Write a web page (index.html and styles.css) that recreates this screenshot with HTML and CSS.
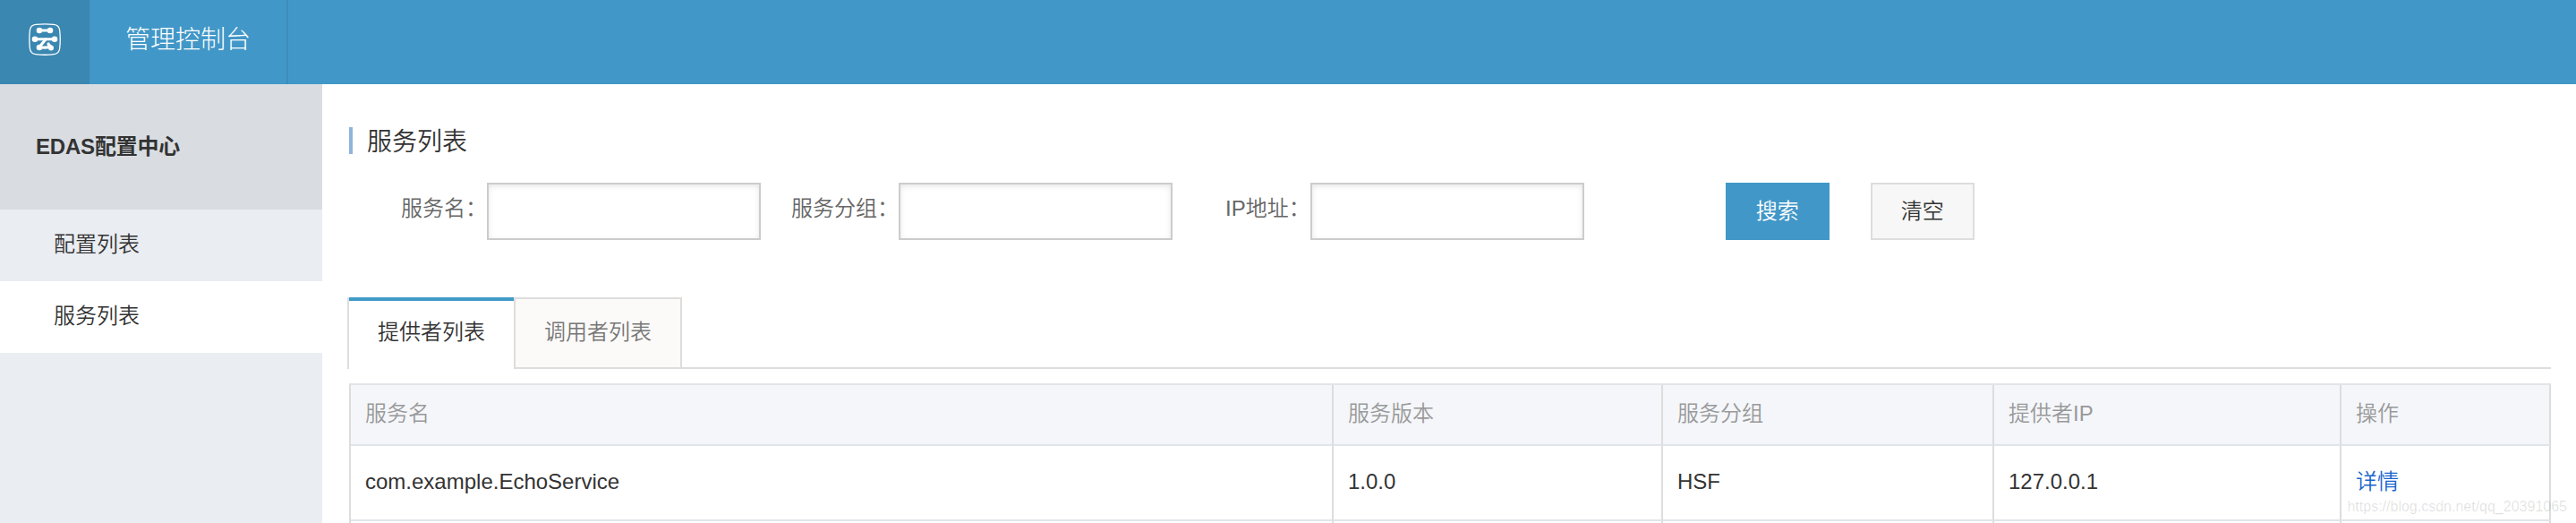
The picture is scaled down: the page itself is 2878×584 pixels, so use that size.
FILE: index.html
```html
<!DOCTYPE html>
<html lang="zh-CN">
<head>
  <meta charset="UTF-8">
  <title>EDAS配置中心</title>
  <link rel="stylesheet" href="styles.css">
</head>
<body>
  <!-- Top bar -->
  <div class="topbar">
    <div class="logo">
      <svg width="36" height="36" viewBox="0 0 36 36" fill="none" stroke="#fff" stroke-linecap="round">
        <path d="M8 1.4Q18 .2 28 1.4Q34 2 34.7 8Q35.8 18 34.7 28Q34 34 28 34.7Q18 35.8 8 34.7Q2 34 1.4 28Q.2 18 1.4 8Q2 2 8 1.4Z" stroke-width="1.3"/>
        <path d="M12 8H24M7 17.7H29" stroke-width="3"/>
        <path d="M19 18L12 26.5Q19 28 24.5 26" stroke-width="3.2"/>
        <path d="M22 23L25 27.5" stroke-width="3.2"/>
        <g fill="#fff" stroke="none">
          <circle cx="12" cy="8" r="3.3"/>
          <circle cx="24" cy="8" r="3.3"/>
          <circle cx="7" cy="17.7" r="3.3"/>
          <circle cx="29" cy="17.7" r="3.3"/>
          <circle cx="12" cy="27" r="3.3"/>
          <circle cx="25" cy="27.5" r="3"/>
        </g>
      </svg>
    </div>
    <div class="console-title">管理控制台</div>
  </div>

  <div class="layout">
    <!-- Sidebar -->
    <div class="sidebar">
      <div class="sidebar-title">EDAS配置中心</div>
      <a class="menu-item">配置列表</a>
      <a class="menu-item active">服务列表</a>
    </div>

    <!-- Content -->
    <div class="content">
      <div class="page-title">服务列表</div>

      <div class="search-form">
        <label for="service">服务名：</label>
        <input type="text" id="service">
        <label for="group">服务分组：</label>
        <input type="text" id="group">
        <label for="ip">IP地址：</label>
        <input type="text" id="ip">
        <button class="btn btn-primary">搜索</button>
        <button class="btn">清空</button>
      </div>

      <div class="tabs">
        <div class="tab active">提供者列表</div>
        <div class="tab">调用者列表</div>
        <div class="tab-line"></div>
      </div>

      <div class="table">
        <div class="row head">
          <div class="cell">服务名</div>
          <div class="cell">服务版本</div>
          <div class="cell">服务分组</div>
          <div class="cell">提供者IP</div>
          <div class="cell">操作</div>
        </div>
        <div class="row">
          <div class="cell">com.example.EchoService</div>
          <div class="cell">1.0.0</div>
          <div class="cell">HSF</div>
          <div class="cell">127.0.0.1</div>
          <div class="cell"><a class="link">详情</a></div>
        </div>
        <div class="row last">
          <div class="cell"></div>
          <div class="cell"></div>
          <div class="cell"></div>
          <div class="cell"></div>
          <div class="cell"></div>
        </div>
      </div>
    </div>
  </div>

  <div class="watermark">https://blog.csdn.net/qq_20391065</div>
</body>
</html>
```
FILE: styles.css
```css
* {
  box-sizing: border-box;
}

body {
  margin: 0;
  height: 584px;
  position: relative;
  font-family: "Liberation Sans", "Noto Sans CJK SC", sans-serif;
  font-size: 24px;
  font-weight: 350;
  color: #333;
  background-color: #fff;
}

.topbar {
  display: flex;
  height: 94px;
  background-color: #4197c7;
}

.logo {
  display: flex;
  width: 100px;
  padding: 26px 32px;
  background-color: #3a87b1;
}

.console-title {
  width: 222px;
  padding-left: 40px;
  border-right: 2px solid #3c8dba;
  line-height: 90px;
  font-size: 28px;
  font-weight: 300;
  color: #fff;
}

.layout {
  display: flex;
  height: 490px;
}

/* Sidebar */
.sidebar {
  width: 360px;
  background-color: #eaedf2;
}

.sidebar-title {
  height: 140px;
  padding-left: 40px;
  line-height: 139px;
  font-weight: bold;
  letter-spacing: -0.2px;
  background-color: #d9dde2;
}

.menu-item {
  display: block;
  height: 80px;
  padding-left: 60px;
  line-height: 78px;
}

.menu-item.active {
  background-color: #fff;
}

/* Content */
.content {
  flex: 1;
  padding: 48px 28px 0 30px;
}

.page-title {
  height: 30px;
  padding-left: 16px;
  border-left: 4px solid #8eb5dc;
  line-height: 34px;
  font-size: 28px;
}

.search-form {
  display: flex;
  height: 64px;
  margin-top: 32px;
  padding-left: 58px;
}

.search-form label {
  line-height: 58px;
  color: #666;
}

.search-form input {
  width: 306px;
  height: 64px;
  margin-right: 34px;
  border: 2px solid #ccc;
  background-color: #fff;
  box-shadow: inset 0 2px 6px rgba(0, 0, 0, 0.1);
}

#group {
  margin-right: 59px;
}

#ip {
  margin-right: 158px;
}

.btn {
  width: 116px;
  height: 64px;
  padding: 0 0 6px;
  border: 2px solid #ddd;
  font: inherit;
  color: #333;
  background-color: #f7f7f7;
}

.btn-primary {
  margin-right: 46px;
  border-color: #4197c7;
  color: #fff;
  background-color: #4197c7;
}

/* Tabs */
.tabs {
  display: flex;
  height: 80px;
  margin: 64px 0 16px -2px;
}

.tab {
  width: 188px;
  border: 2px solid #ddd;
  line-height: 74px;
  text-align: center;
  color: #777;
  background-color: #fbfaf8;
}

.tab.active {
  width: 186px;
  border-width: 0 0 0 2px;
  background: linear-gradient(#429ac9, #429ac9) no-repeat 0 0 / 100% 4px;
  line-height: 78px;
  color: #333;
}

.tab-line {
  flex: 1;
  border-bottom: 2px solid #ddd;
}

/* Table */
.table {
  border-left: 2px solid #ddd;
  border-top: 2px solid #e1e4e9;
}

.row {
  display: grid;
  grid-template-columns: 1098px 368px 370px 388px 234px;
  height: 84px;
  line-height: 80px;
}

.row.head {
  height: 68px;
  line-height: 64px;
  color: #999;
  background-color: #f4f6fa;
}

.row.last {
  height: 2px;
}

.cell {
  padding-left: 16px;
  border-right: 2px solid #ddd;
  border-bottom: 2px solid #e1e4e9;
}

.row.last .cell {
  border-bottom: 0;
}

.link {
  color: #1a66cc;
}

.watermark {
  position: absolute;
  right: 10px;
  bottom: 8px;
  font-size: 16px;
  line-height: 20px;
  color: rgba(0, 0, 0, 0.12);
}
```
